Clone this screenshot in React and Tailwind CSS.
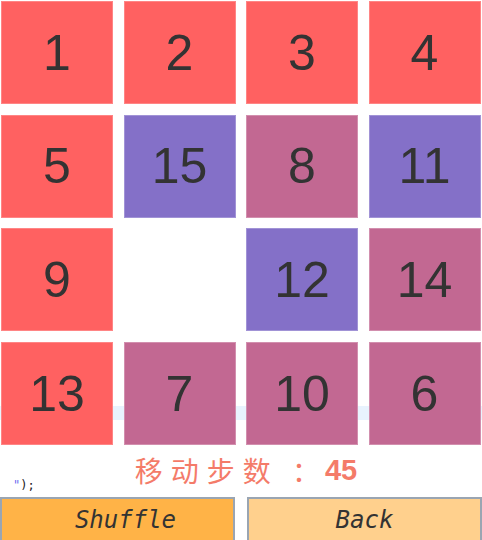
import { useState } from 'react'

const tileColor = {
  red: 'bg-[#ff6161] border-[#ff8585]',
  purple: 'bg-[#8470c8] border-[#a193d6]',
  pink: 'bg-[#c26892] border-[#d28fae]',
}

const initial = [
  [1, 'red'], [2, 'red'], [3, 'red'], [4, 'red'],
  [5, 'red'], [15, 'purple'], [8, 'pink'], [11, 'purple'],
  [9, 'red'], [0, null], [12, 'purple'], [14, 'pink'],
  [13, 'red'], [7, 'pink'], [10, 'pink'], [6, 'pink'],
]

function Tile({ value, color }) {
  if (!value) return <div className="h-[103px]" />
  return (
    <div className={`h-[103px] border flex items-center justify-center ${tileColor[color]}`}>
      <span className="text-[50px] leading-none text-[#333] font-['Liberation_Sans',Arial,sans-serif]">{value}</span>
    </div>
  )
}

export default function App() {
  const [tiles] = useState(initial)
  const [steps] = useState(45)

  return (
    <div className="relative w-[482px] h-[540px] overflow-hidden bg-white">
      {/* faint band behind last row */}
      <div className="absolute left-0 right-0 top-[406px] h-[14px] bg-[#e8f3fe]" />

      <div className="relative pt-[1px] pl-[1px] w-[481px] grid grid-cols-[repeat(4,112px)] gap-x-[10.5px] gap-y-[10.7px]">
        {tiles.map(([v, c], i) => (
          <Tile key={i} value={v} color={c} />
        ))}
      </div>

      <div className="relative mt-[8px] pl-[10px] flex justify-center items-center h-[34px] text-[#f47b69]">
        <span className="text-[28px] leading-[34px] tracking-[8px] font-['Noto_Sans_CJK_SC',sans-serif]">移动步数</span>
        <span className="ml-[13px] w-[33px] text-[28px] leading-[34px] font-['Noto_Sans_CJK_SC',sans-serif]">：</span>
        <span className="font-bold text-[29px] leading-[34px] font-['Liberation_Sans',Arial,sans-serif]">{steps}</span>
      </div>

      <span className="absolute left-[13px] top-[479px] text-[12px] leading-none text-[#222] font-['DejaVu_Sans_Mono',monospace]">
        <span className="text-[#6b6bf0]">"</span>);
      </span>

      <div className="absolute left-0 right-0 top-[497px] flex justify-between">
        <button className="w-[235px] h-[46px] pl-4 bg-[#ffb347] border-2 border-[#9aa5b2] text-[24px] italic text-[#333] font-['DejaVu_Sans_Mono',monospace]">
          Shuffle
        </button>
        <button className="w-[235px] h-[46px] bg-[#ffd08d] border-2 border-[#9aa5b2] text-[24px] italic text-[#333] font-['DejaVu_Sans_Mono',monospace]">
          Back
        </button>
      </div>
    </div>
  )
}
